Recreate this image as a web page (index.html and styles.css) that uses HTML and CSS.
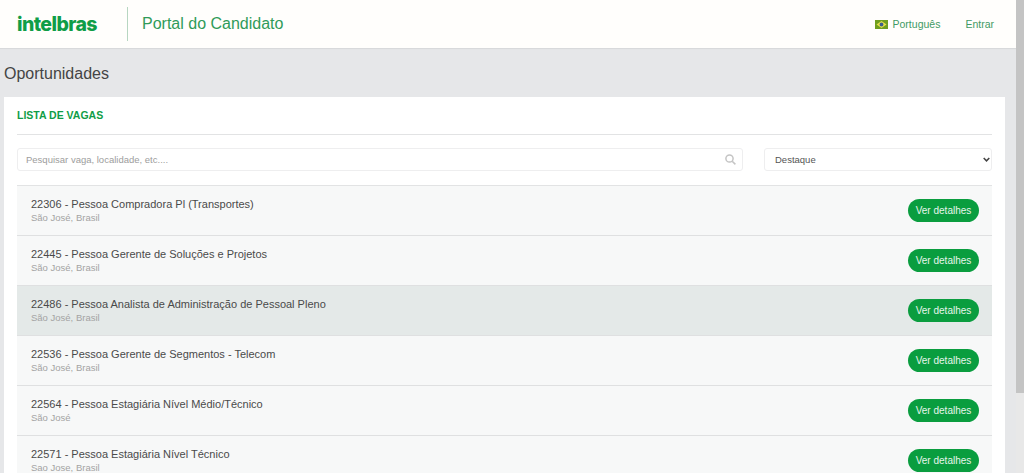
FILE: index.html
```html
<!DOCTYPE html>
<html lang="pt-BR">
<head>
<meta charset="utf-8">
<title>Portal do Candidato</title>
<link rel="stylesheet" href="styles.css">
</head>
<body>
<div class="shell">
  <div class="page">
    <header class="topbar">
      <div class="brand">
        <span class="logo">intelbras</span>
        <span class="divider"></span>
        <span class="portal">Portal do Candidato</span>
      </div>
      <nav class="topnav">
        <span class="lang">
          <svg class="flag" width="13" height="9" viewBox="0 0 13 9"><rect width="13" height="9" fill="#6f9e1e"/><path d="M6.5 1 L11.5 4.5 L6.5 8 L1.5 4.5Z" fill="#e6e04a"/><circle cx="6.5" cy="4.5" r="1.9" fill="#3c5f8a"/></svg>
          Português
        </span>
        <span class="enter">Entrar</span>
      </nav>
    </header>
    <h1 class="title">Oportunidades</h1>
    <main class="card">
      <h2 class="card-title">LISTA DE VAGAS</h2>
      <div class="filters">
        <div class="search">
          <span class="placeholder">Pesquisar vaga, localidade, etc....</span>
          <svg width="11" height="11" viewBox="0 0 11 11" fill="none" stroke="#c4c4c4" stroke-width="1.5"><circle cx="4.5" cy="4.5" r="3.6"/><path d="M7.2 7.2 L10.4 10.4"/></svg>
        </div>
        <div class="select">
          <span>Destaque</span>
          <svg width="7" height="5" viewBox="0 0 7 5" fill="none" stroke="#444" stroke-width="1.5"><path d="M0.7 0.9 L3.5 3.8 L6.3 0.9"/></svg>
        </div>
      </div>
      <ul class="jobs">
        <li class="job"><div><div class="job-name">22306 - Pessoa Compradora Pl (Transportes)</div><div class="job-place">São José, Brasil</div></div><span class="btn">Ver detalhes</span></li>
        <li class="job"><div><div class="job-name">22445 - Pessoa Gerente de Soluções e Projetos</div><div class="job-place">São José, Brasil</div></div><span class="btn">Ver detalhes</span></li>
        <li class="job job-hover"><div><div class="job-name">22486 - Pessoa Analista de Administração de Pessoal Pleno</div><div class="job-place">São José, Brasil</div></div><span class="btn">Ver detalhes</span></li>
        <li class="job"><div><div class="job-name">22536 - Pessoa Gerente de Segmentos - Telecom</div><div class="job-place">São José, Brasil</div></div><span class="btn">Ver detalhes</span></li>
        <li class="job"><div><div class="job-name">22564 - Pessoa Estagiária Nível Médio/Técnico</div><div class="job-place">São José</div></div><span class="btn">Ver detalhes</span></li>
        <li class="job"><div><div class="job-name">22571 - Pessoa Estagiária Nível Técnico</div><div class="job-place">Sao Jose, Brasil</div></div><span class="btn">Ver detalhes</span></li>
      </ul>
    </main>
  </div>
  <div class="scrollbar"><div class="thumb"></div></div>
</div>
</body>
</html>
```
FILE: styles.css
```css
* { box-sizing: border-box; }
html, body { margin: 0; height: 473px; overflow: hidden; }
body { font-family: "Liberation Sans", Arial, sans-serif; background: #e6e7e9; color: #444; }
.shell { display: flex; height: 473px; overflow: hidden; }
.page { flex: 1; min-width: 0; }
.scrollbar { width: 8px; background: #e8e8e8; }
.thumb { height: 393px; background: #c4c4c4; }

.topbar { height: 48px; background: #fffefc; display: flex; align-items: center; justify-content: space-between; padding: 0 22px 0 17px; box-shadow: 0 1px 1px rgba(0,0,0,.06); }
.brand { display: flex; align-items: center; }
.logo { font-family: "Inter", sans-serif; font-weight: 800; font-size: 19.5px; letter-spacing: -0.6px; color: #0f9d47; width: 110px; }
.divider { width: 1px; height: 34px; background: #b7d6c1; }
.portal { margin-left: 14px; font-size: 16px; color: #2f9b59; }
.topnav { display: flex; align-items: center; gap: 25px; font-size: 10.5px; color: #3f9a64; }
.lang { display: flex; align-items: center; gap: 5px; }
.flag { display: block; }

.title { margin: 0; padding: 16px 0 0 4px; height: 49px; font-size: 16px; line-height: 19px; font-weight: 400; color: #444; }
.card { margin: 0 11px 0 4px; background: #fff; padding: 0 13px; height: 400px; }
.card-title { margin: 0; height: 38px; padding-top: 12px; line-height: 13px; font-size: 10.5px; font-weight: 700; color: #0f9d47; border-bottom: 1px solid #e2e3e4; }
.filters { display: flex; gap: 21px; padding-top: 13px; height: 50px; }
.search, .select { height: 23px; border: 1px solid #eeeeef; border-radius: 3px; display: flex; align-items: center; justify-content: space-between; font-size: 9.5px; background: #fff; }
.search { flex: 1; padding: 0 6px 0 8px; color: #9d9d9d; }
.select { width: 228px; padding: 0 1px 0 10px; color: #555; }
.jobs { list-style: none; margin: 0; padding: 0; border-top: 1px solid #e2e3e4; }
.job { height: 50px; background: #f7f8f8; border-bottom: 1px solid #dfe0e1; display: flex; align-items: center; justify-content: space-between; padding: 0 13px 0 14px; }
.job-hover { background: #e4e9e8; }
.job-name { font-size: 11px; line-height: 14px; color: #4a4a4a; }
.job-place { font-size: 9.5px; line-height: 13px; color: #a3a3a3; }
.btn { height: 23px; width: 71px; border-radius: 12px; background: #0a9d3f; color: #e8f5ec; font-size: 10px; display: flex; align-items: center; justify-content: center; }
```
